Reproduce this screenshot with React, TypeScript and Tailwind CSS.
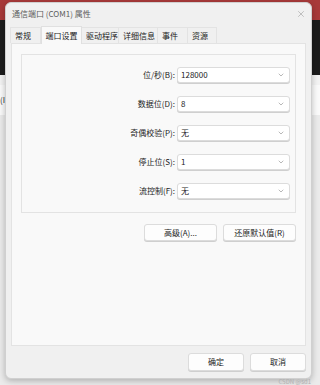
import { ChevronDown, X } from "lucide-react";

const font = { fontFamily: '"Noto Sans CJK SC", "Noto Sans", sans-serif' };

const fields = [
  { label: "位/秒(B):", value: "128000" },
  { label: "数据位(D):", value: "8" },
  { label: "奇偶校验(P):", value: "无" },
  { label: "停止位(S):", value: "1" },
  { label: "流控制(F):", value: "无" },
];

const tabs = [
  { name: "常规", w: "w-[31px]" },
  { name: "端口设置", w: "w-[41px]", active: true },
  { name: "驱动程序", w: "w-[38px]" },
  { name: "详细信息", w: "w-[40px]" },
  { name: "事件", w: "w-[31px]" },
  { name: "资源", w: "w-[30px]" },
];

function Combo({ value }: { value: string }) {
  return (
    <div className="flex h-[16px] w-[113px] items-center justify-between rounded-[3px] border border-[#dcdcdc] bg-white pl-[3px] pr-[4px] shadow-[0_1px_0_#cfcfcf]">
      <span className="text-[8px] leading-none text-[#1b1b1b]">{value}</span>
      <ChevronDown size={8} strokeWidth={1.5} className="text-[#707070]" />
    </div>
  );
}

function Btn({ label, w, h = "h-[17px]" }: { label: string; w: string; h?: string }) {
  return (
    <div
      className={`flex ${h} ${w} items-center justify-center rounded-[3px] border border-[#dcdcdc] bg-[#fdfdfd] text-[8px] leading-none text-[#1b1b1b] shadow-[0_1px_0_#cfcfcf]`}
    >
      {label}
    </div>
  );
}

export default function App() {
  return (
    <div className="relative h-[385px] w-[320px] overflow-hidden bg-[#e9e9e9]" style={font}>
      {/* desktop behind the dialog */}
      <div className="h-[20px] bg-[#a83a3a]" />
      <div className="h-[55px] bg-[#1c1c1c]" />
      <div className="h-[10px] bg-[#f3f3f3]" />
      <div className="flex h-[30px] items-center bg-[#fafafa] text-[8px] text-[#333]">(I</div>
      <div className="h-[270px] bg-[#ebebeb]" />

      {/* dialog */}
      <div className="absolute left-[5px] top-[2px] flex h-[377px] w-[307px] flex-col rounded-[6px] border border-[#d0d0d0] bg-[#f0f0f0] shadow-[0_2px_6px_rgba(0,0,0,0.25)]">
        <div className="flex h-[22px] items-center justify-between pl-[6px] pr-[5px]">
          <span className="text-[8px] text-[#5c5c5c]">通信端口 (COM1) 属性</span>
          <X size={10} strokeWidth={1} className="text-[#7a7a7a]" />
        </div>

        <div className="flex flex-1 flex-col px-[5px]">
          <div className="flex h-[18px] items-end">
            {tabs.map((t) => (
              <div
                key={t.name}
                className={
                  t.active
                    ? `relative z-10 -mb-px flex h-[18px] ${t.w} items-center justify-center border border-b-0 border-[#e0e0e0] bg-[#f9f9f9] text-[8px] text-[#1b1b1b]`
                    : `-ml-px flex h-[16px] ${t.w} items-center border border-b-0 border-[#e3e3e3] bg-[#f0f0f0] pl-[4px] text-[8px] text-[#1b1b1b]`
                }
              >
                {t.name}
              </div>
            ))}
          </div>

          <div className="flex h-[303px] flex-col border border-[#e3e3e3] bg-[#f9f9f9] px-[9px] pt-[10px]">
            <div className="flex h-[159px] flex-col gap-[13px] border border-[#e3e3e3] pt-[12px]">
              {fields.map((f) => (
                <div key={f.label} className="flex items-center gap-[2px] pl-[2px]">
                  <span className="w-[151px] text-right text-[8px] leading-none text-[#1b1b1b]">{f.label}</span>
                  <Combo value={f.value} />
                </div>
              ))}
            </div>
            <div className="mt-[11px] flex justify-end gap-[6px]">
              <Btn label="高级(A)..." w="w-[73px]" />
              <Btn label="还原默认值(R)" w="w-[73px]" />
            </div>
          </div>

          <div className="mt-[7px] flex justify-end gap-[6px]">
            <Btn label="确定" w="w-[56px]" h="h-[18px]" />
            <Btn label="取消" w="w-[56px]" h="h-[18px]" />
          </div>
        </div>
      </div>

      <span className="absolute bottom-[0px] right-[9px] text-[6px] leading-none text-[#b0b0b0]">CSDN @sd1</span>
    </div>
  );
}
